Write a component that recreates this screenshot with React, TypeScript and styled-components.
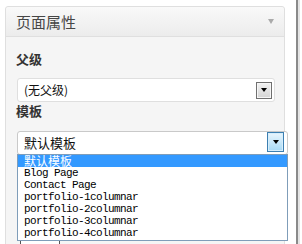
import styled, { createGlobalStyle } from "styled-components";

const GlobalStyle = createGlobalStyle`
  html, body {
    margin: 0;
    padding: 0;
    background: #ffffff;
  }
  body {
    font-family: "Noto Sans CJK SC", "Liberation Sans", sans-serif;
    color: #333;
  }
`;

const Page = styled.div`
  display: flex;
  height: 244px;
  overflow: hidden;
`;

const Panel = styled.div`
  margin: 6px 0 0 5px;
  width: 278px;
  height: 260px;
  border: 1px solid #dfdfdf;
  border-radius: 3px;
  background: #f5f5f5;
`;

const Header = styled.div`
  display: flex;
  align-items: center;
  justify-content: space-between;
  height: 29px;
  padding: 0 10px 0 10px;
  border-bottom: 1px solid #dfdfdf;
  border-radius: 3px 3px 0 0;
  background: linear-gradient(to bottom, #f9f9f9, #ececec);
`;

const Title = styled.span`
  font-size: 15px;
  line-height: 18px;
  color: #464646;
`;

const Caret = styled.span<{ $color: string; $w: number; $h: number }>`
  width: 0;
  height: 0;
  border-left: ${(p) => p.$w / 2}px solid transparent;
  border-right: ${(p) => p.$w / 2}px solid transparent;
  border-top: ${(p) => p.$h}px solid ${(p) => p.$color};
`;

const Body = styled.div`
  padding: 13px 10px 0 10px;
`;

const Label = styled.div`
  font-size: 13px;
  font-weight: bold;
  line-height: 18px;
  color: #333;
`;

const SelectBox = styled.div<{ $width: number; $open?: boolean }>`
  position: relative;
  box-sizing: border-box;
  display: flex;
  align-items: ${(p) => (p.$open ? "flex-start" : "center")};
  justify-content: space-between;
  width: ${(p) => p.$width}px;
  height: 24px;
  margin-left: 1px;
  padding: ${(p) => (p.$open ? "0 3px 0 6px" : "0 2px 0 6px")};
  border: 1px solid ${(p) => (p.$open ? "#c9c9c9" : "#dfdfdf")};
  border-radius: 3px;
  background: #fff;
`;

const SelectText = styled.span<{ $size: number }>`
  font-size: ${(p) => p.$size}px;
  line-height: 22px;
  color: #111;
`;

const DropButton = styled.span<{ $active?: boolean }>`
  box-sizing: border-box;
  display: flex;
  align-items: center;
  justify-content: center;
  width: ${(p) => (p.$active ? 17 : 16)}px;
  height: ${(p) => (p.$active ? 20 : 17)}px;
  border: 1px solid ${(p) => (p.$active ? "#3c7fb1" : "#707070")};
  box-shadow: inset 0 0 0 1px ${(p) => (p.$active ? "#d6eefc" : "#f6f6f6")};
  background: ${(p) =>
    p.$active
      ? "linear-gradient(to bottom, #eaf6fd, #a7d9f5)"
      : "linear-gradient(to bottom, #f2f2f2, #d4d4d4)"};
`;

const OptionList = styled.ul`
  position: absolute;
  top: 100%;
  left: -1px;
  z-index: 2;
  box-sizing: border-box;
  width: 271px;
  margin: 0;
  padding: 0 0 1px 0;
  list-style: none;
  border: 1px solid #7f9db9;
  background: #fff;
`;

const Option = styled.li<{ $selected?: boolean; $cjk?: boolean }>`
  height: 12px;
  padding-left: 6px;
  font-family: ${(p) =>
    p.$cjk
      ? '"Noto Sans CJK SC", sans-serif'
      : '"Liberation Mono", "DejaVu Sans Mono", monospace'};
  font-size: ${(p) => (p.$cjk ? 12 : 11)}px;
  letter-spacing: ${(p) => (p.$cjk ? 0 : -0.6)}px;
  line-height: 12px;
  white-space: nowrap;
  color: ${(p) => (p.$selected ? "#fff" : "#000")};
  background: ${(p) => (p.$selected ? "#3399ff" : "transparent")};
`;

const Gap = styled.div<{ $h: number }>`
  height: ${(p) => p.$h}px;
`;

const OrderInput = styled.div`
  box-sizing: border-box;
  width: 40px;
  height: 22px;
  margin-left: 4px;
  border: 1px solid #555;
  background: #fff;
`;

const Spacer = styled.div`
  flex: 1;
`;

const Rule = styled.div`
  width: 2px;
  margin-right: 2px;
  border-left: 2px solid #8a8a8a;
  background: #e4e4e4;
`;

const templates = [
  "Blog Page",
  "Contact Page",
  "portfolio-1columnar",
  "portfolio-2columnar",
  "portfolio-3columnar",
  "portfolio-4columnar",
];

export default function App() {
  return (
    <>
      <GlobalStyle />
      <Page>
        <Panel>
          <Header>
            <Title>页面属性</Title>
            <Caret $color="#aaaaaa" $w={7} $h={5} />
          </Header>
          <Body>
            <Label>父级</Label>
            <Gap $h={10} />
            <SelectBox $width={258}>
              <SelectText $size={12}>(无父级)</SelectText>
              <DropButton>
                <Caret $color="#000" $w={7} $h={4} />
              </DropButton>
            </SelectBox>
            <Label>模板</Label>
            <Gap $h={11} />
            <SelectBox $width={271} $open>
              <SelectText $size={13}>默认模板</SelectText>
              <DropButton $active>
                <Caret $color="#000" $w={7} $h={4} />
              </DropButton>
              <OptionList>
                <Option $selected $cjk>
                  默认模板
                </Option>
                {templates.map((t) => (
                  <Option key={t}>{t}</Option>
                ))}
              </OptionList>
            </SelectBox>
            <Gap $h={82} />
            <OrderInput />
          </Body>
        </Panel>
        <Spacer />
        <Rule />
      </Page>
    </>
  );
}
